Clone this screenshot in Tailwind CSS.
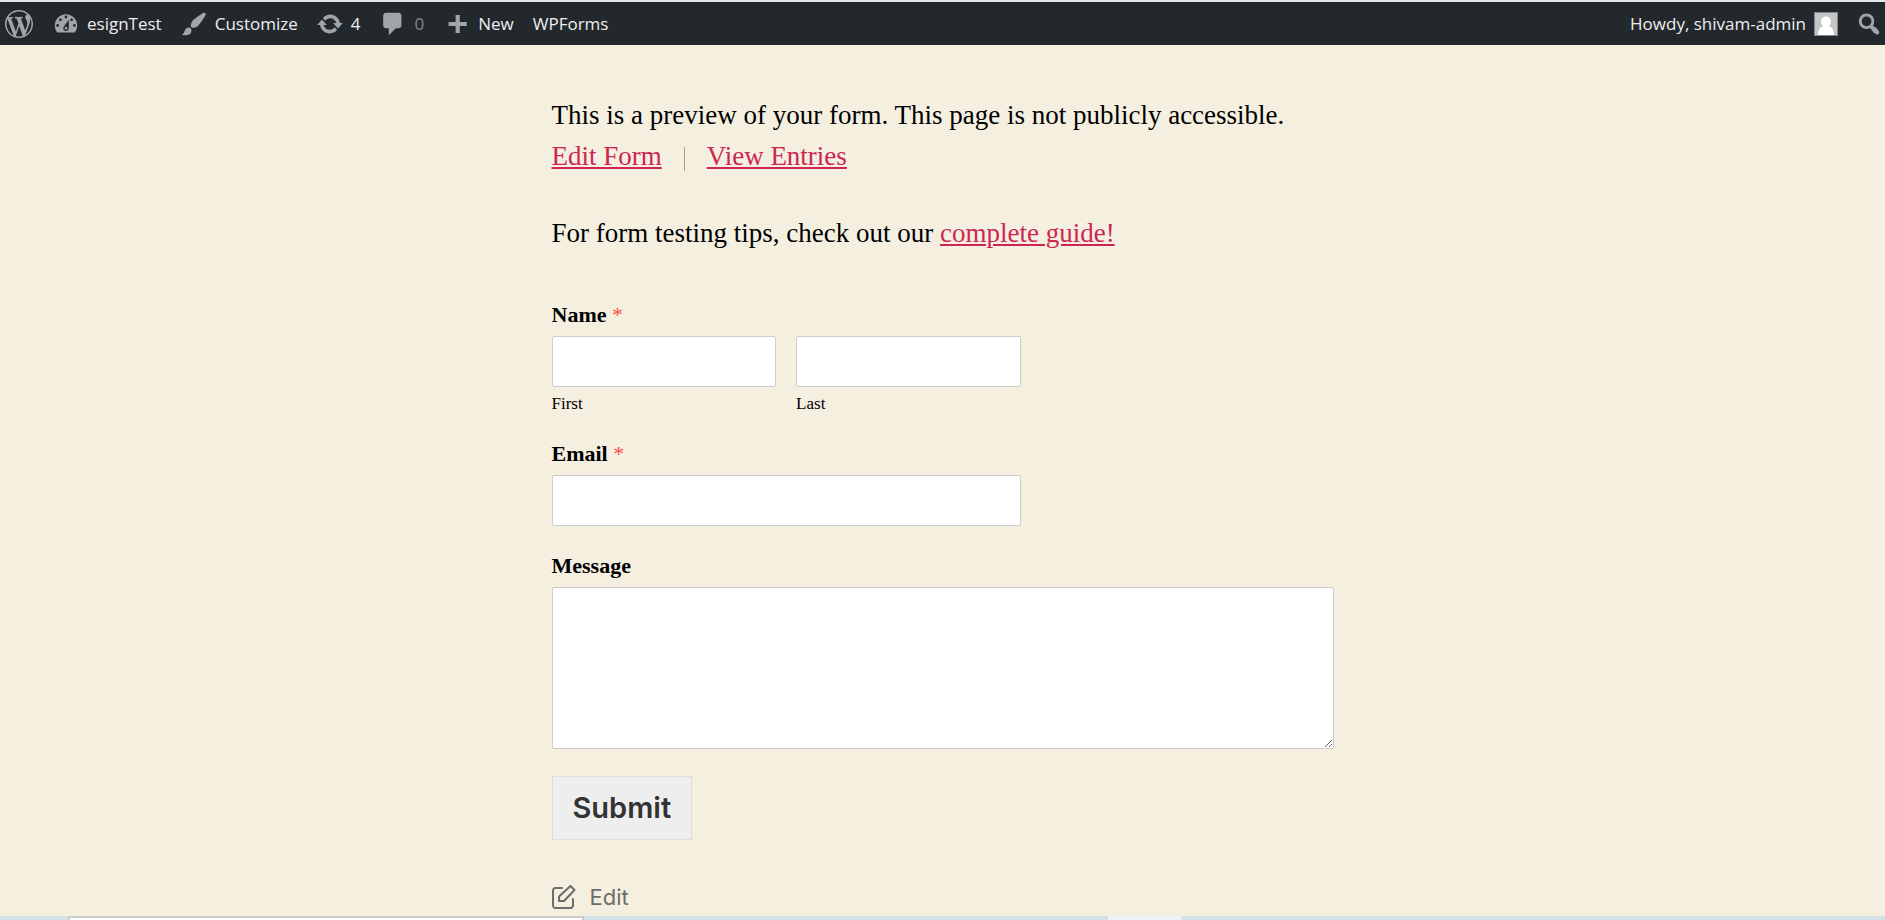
<!DOCTYPE html>
<html lang="en">
<head>
<meta charset="utf-8">
<title>Form Preview</title>
<script src="https://cdn.jsdelivr.net/npm/@tailwindcss/browser@4"></script>
</head>
<body class="flex h-screen flex-col overflow-hidden bg-[#f5efe0] text-black">
<header class="flex h-[45px] shrink-0 items-center justify-between border-t-2 border-[#dfe5e8] bg-[#23282d] font-['Open_Sans',sans-serif] text-[17px] whitespace-nowrap text-[#eeeeee]">
  <nav class="flex items-center" aria-label="Toolbar">
    <a href="#" aria-label="About WordPress" class="ml-[5px]"><svg class="size-7 fill-[#a0a5aa]" viewBox="0 0 20 20"><path d="M20 10c0-5.51-4.49-10-10-10C4.48 0 0 4.49 0 10c0 5.52 4.48 10 10 10 5.51 0 10-4.48 10-10zM7.78 15.37L4.37 6.22c.55-.02 1.17-.08 1.17-.08.5-.06.44-1.13-.06-1.11 0 0-1.45.11-2.37.11-.18 0-.37 0-.58-.01C4.12 2.69 6.87 1.11 10 1.11c2.33 0 4.45.87 6.05 2.34-.68-.11-1.65.39-1.65 1.58 0 .74.45 1.36.9 2.1.35.61.55 1.36.55 2.46 0 1.49-1.4 5-1.4 5l-3.03-8.37c.54-.02.82-.17.82-.17.5-.05.44-1.25-.06-1.22 0 0-1.44.12-2.38.12-.87 0-2.33-.12-2.33-.12-.5-.03-.56 1.2-.06 1.22l.92.08 1.26 3.41zM17.41 10c.24-.64.74-1.87.43-4.25.7 1.29 1.05 2.71 1.05 4.25 0 3.29-1.73 6.24-4.4 7.78.97-2.59 1.94-5.2 2.92-7.78zM6.1 18.09C3.12 16.65 1.11 13.53 1.11 10c0-1.3.23-2.48.72-3.59C3.25 10.3 4.67 14.2 6.1 18.09zm4.03-6.63l2.58 6.98c-.86.29-1.76.45-2.71.45-.79 0-1.57-.11-2.29-.33.81-2.38 1.62-4.74 2.42-7.1z"/></svg></a>
    <a href="#" class="ml-[19px] flex items-center gap-[7px]"><svg class="size-7 fill-[#a0a5aa]" viewBox="0 0 20 20"><path d="M3.76 16h12.48c1.1-1.37 1.76-3.11 1.76-5 0-4.42-3.58-8-8-8s-8 3.58-8 8c0 1.89.66 3.63 1.76 5zM10 4c.55 0 1 .45 1 1s-.45 1-1 1-1-.45-1-1 .45-1 1-1zM6 6c.55 0 1 .45 1 1s-.45 1-1 1-1-.45-1-1 .45-1 1-1zm8 0c.55 0 1 .45 1 1s-.45 1-1 1-1-.45-1-1 .45-1 1-1zm-5.37 5.55L12 7v6c0 1.1-.9 2-2 2s-2-.9-2-2c0-.57.24-1.08.63-1.45zM4 10c.55 0 1 .45 1 1s-.45 1-1 1-1-.45-1-1 .45-1 1-1zm12 0c.55 0 1 .45 1 1s-.45 1-1 1-1-.45-1-1 .45-1 1-1zm-5 3c0-.55-.45-1-1-1s-1 .45-1 1 .45 1 1 1 1-.45 1-1z"/></svg>esignTest</a>
    <a href="#" class="ml-[18px] flex items-center gap-[7px]"><svg class="size-7 fill-[#a0a5aa]" viewBox="0 0 20 20"><path d="M18.33 3.57s.27-.8-.31-1.36c-.53-.52-1.22-.24-1.22-.24-.61.3-5.76 3.47-7.67 5.57-.86.96-2.06 3.79-1.09 4.82.92.98 3.96-.17 4.79-1 2.06-2.06 5.21-7.17 5.5-7.79zM1.4 17.65c2.37-1.56 1.46-3.41 3.23-4.64.93-.65 2.22-.62 3.08.29.63.67.8 2.57-.16 3.46-1.57 1.45-4 1.55-6.15.89z"/></svg>Customize</a>
    <a href="#" class="ml-[18px] flex items-center gap-[7px]"><svg class="size-7 fill-[#a0a5aa]" viewBox="0 0 20 20"><path d="M10.2 3.28c3.53 0 6.43 2.61 6.92 6h2.08l-3.5 4-3.5-4h2.32c-.45-1.97-2.21-3.45-4.32-3.45-1.45 0-2.73.71-3.54 1.78L4.95 5.66C6.23 4.2 8.11 3.28 10.2 3.28zm-.4 13.44c-3.52 0-6.43-2.61-6.92-6H.8l3.5-4c1.17 1.33 2.33 2.67 3.5 4H5.48c.45 1.97 2.21 3.45 4.32 3.45 1.45 0 2.73-.71 3.54-1.78l1.71 1.95c-1.28 1.46-3.15 2.38-5.25 2.38z"/></svg>4</a>
    <a href="#" class="ml-[19px] flex items-center gap-[7px] text-[#82878c]"><svg class="size-7 fill-[#a0a5aa]" viewBox="0 0 20 20"><path d="M5 2h9c1.1 0 2 .9 2 2v7c0 1.1-.9 2-2 2h-2l-5 5v-5H5c-1.1 0-2-.9-2-2V4c0-1.1.9-2 2-2z"/></svg>0</a>
    <a href="#" class="ml-[19px] flex items-center gap-[7px]"><svg class="size-7 fill-[#a0a5aa]" viewBox="0 0 20 20"><path d="M17 8.500v3h-5v5H9v-5H4v-3h5v-5h3v5h5z"/></svg>New</a>
    <a href="#" class="ml-[19px]">WPForms</a>
  </nav>
  <div class="flex items-center">
    <a href="#" class="flex items-center gap-2">Howdy, shivam-admin
      <svg class="size-6" viewBox="0 0 24 24"><path fill="#82878c" d="M0 0h24v24H0z"/><path fill="#c5c5c5" d="M1 1h22v22H1z"/><path fill="#fff" d="M12 4.500c3 0 5 2.200 5 5 0 2-.8 3.700-2 4.700 3 .8 5 4 5 8.800H4c0-4.800 2-8 5-8.800-1.200-1-2-2.700-2-4.700 0-2.800 2-5 5-5z"/></svg></a>
    <button type="button" aria-label="Search" class="mr-0.5 ml-[17px]"><svg class="size-7 fill-[#a0a5aa]" viewBox="0 0 20 20"><path d="M12.140 4.180c1.870 1.870 2.110 4.750.72 6.890.12.1.22.21.36.31.2.16.47.36.81.59.34.24.56.39.66.47.42.31.73.57.94.78.32.32.6.65.84 1 .25.35.44.69.59 1.040.14.35.21.68.18 1-.02.32-.14.59-.36.81s-.49.34-.81.36c-.31.02-.65-.04-.99-.19-.35-.14-.7-.34-1.040-.59-.35-.24-.68-.52-1-.84-.21-.21-.47-.52-.77-.93-.1-.13-.25-.35-.47-.66-.22-.32-.4-.57-.56-.78-.16-.2-.29-.35-.44-.5-2.070 1.090-4.690.76-6.440-.98-2.140-2.150-2.140-5.640 0-7.780 2.150-2.150 5.630-2.150 7.780 0zm-1.410 6.360c1.360-1.370 1.360-3.580 0-4.950-1.370-1.370-3.590-1.370-4.950 0-1.370 1.370-1.370 3.580 0 4.950 1.360 1.370 3.580 1.370 4.950 0z"/></svg></button>
  </div>
</header>
<main class="mx-auto min-h-0 w-full max-w-[782px] flex-1 pt-[50px] font-['Liberation_Serif',serif] text-[27px] leading-[41px]">
  <p>This is a preview of your form. This page is not publicly accessible.</p>
  <p class="flex items-center"><a href="#" class="text-[#cd2653] underline decoration-2 underline-offset-2">Edit Form</a><span class="mx-[22px] mt-1 h-6 w-px bg-[#a5a199]"></span><a href="#" class="text-[#cd2653] underline decoration-2 underline-offset-2">View Entries</a></p>
  <p class="mt-9">For form testing tips, check out our <a href="#" class="text-[#cd2653] underline decoration-2 underline-offset-2">complete guide!</a></p>
  <form class="mt-[46px]">
    <fieldset>
      <legend class="mb-[6px] text-[22px] leading-[30px] font-bold">Name <span class="font-normal text-[#ff4a4a]">*</span></legend>
      <div class="grid w-3/5 grid-cols-2 gap-5">
        <div class="flex flex-col"><input id="first" type="text" class="order-1 h-[51px] w-full rounded-xs border border-[#cccccc] bg-white px-3"><label for="first" class="order-2 mt-1 text-[17px] leading-[26px]">First</label></div>
        <div class="flex flex-col"><input id="last" type="text" class="order-1 h-[51px] w-full rounded-xs border border-[#cccccc] bg-white px-3"><label for="last" class="order-2 mt-1 text-[17px] leading-[26px]">Last</label></div>
      </div>
    </fieldset>
    <label for="email" class="mt-[22px] mb-[6px] block text-[22px] leading-[30px] font-bold">Email <span class="font-normal text-[#ff4a4a]">*</span></label>
    <input id="email" type="email" class="block h-[51px] w-3/5 rounded-xs border border-[#cccccc] bg-white px-3">
    <label for="message" class="mt-[25px] mb-[6px] block text-[22px] leading-[30px] font-bold">Message</label>
    <textarea id="message" class="block h-[162px] w-full rounded-xs border border-[#cccccc] bg-white px-3"></textarea>
    <button type="submit" class="mt-[27px] block h-16 border border-[#dddddd] bg-[#eeeeee] px-[20px] font-['Inter',sans-serif] text-[29px] leading-8 font-semibold text-[#333333]">Submit</button>
  </form>
  <a href="#" class="mt-[41px] flex w-fit items-center gap-[14px] font-['Inter',sans-serif] text-[22px] leading-8 text-[#6d6d6d]"><svg class="size-6" viewBox="0 0 24 24" fill="none" stroke="#6d6d6d" stroke-width="2" stroke-linejoin="round" stroke-linecap="round"><path d="M10 3H3.500A2.500 2.500 0 0 0 1 5.500v15A2.500 2.500 0 0 0 3.500 23h15a2.500 2.500 0 0 0 2.500-2.500V14"/><path d="M18.500 1l4 4L12 16H7v-4.500z"/></svg>Edit</a>
</main>
<footer class="flex h-1 shrink-0 bg-[#d3e1e8]" aria-hidden="true"><span class="ml-[68px] w-[516px] border-x-2 border-t-2 border-[#cccccc] bg-white"></span><span class="ml-[524px] w-[73px] bg-[#edf2f5]"></span></footer>
</body>
</html>
